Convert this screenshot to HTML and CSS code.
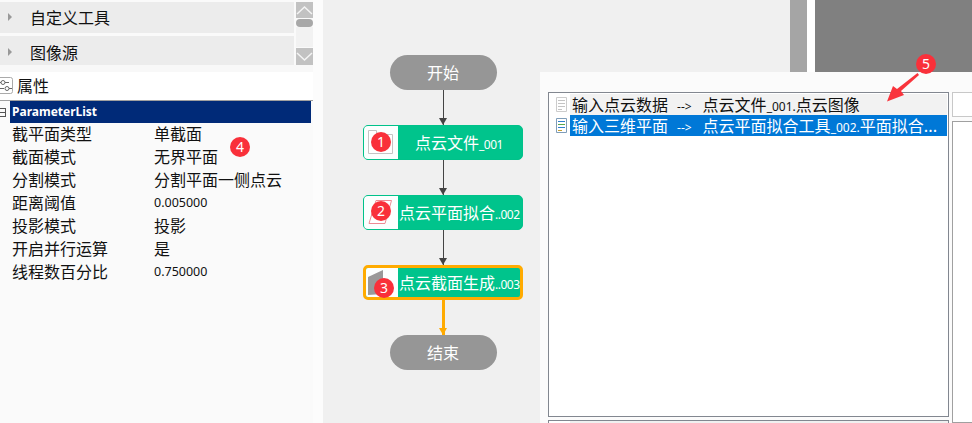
FILE: index.html
```html
<!DOCTYPE html>
<html>
<head lang="en">
    <meta charset="UTF-8">
    <title>流程编辑</title>
    <link rel="stylesheet" href="styles.css">
</head>
<body>
    <div id="page">
        <div id="side">
            <div id="tools">
                <div id="toolList">
                    <div class="tool"><i class="caret"></i>自定义工具</div>
                    <div class="tool"><i class="caret"></i>图像源</div>
                </div>
                <div id="scroll">
                    <span class="scrollBtn">
                        <svg width="17" height="16" viewBox="0 0 17 16"><path d="M1 12 L8.5 5 L16 12" fill="none" stroke="#f4f4f4" stroke-width="1.5"/></svg>
                    </span>
                    <span id="thumb"></span>
                    <span id="track"></span>
                    <span class="scrollBtn">
                        <svg width="17" height="17" viewBox="0 0 17 17"><path d="M1 5 L8.5 12 L16 5" fill="none" stroke="#f4f4f4" stroke-width="1.5"/></svg>
                    </span>
                </div>
            </div>
            <div id="propTitle">
                <svg width="14" height="19" viewBox="0 0 14 19"><path d="M-1 1.5 H10.5 Q12.5 1.5 12.5 3.5 V15.5 Q12.5 17.5 10.5 17.5 H-1" fill="none" stroke="#aaa"/><path d="M0 6.5 H9 M0 12.5 H4 M9 12.5 H12" stroke="#666" fill="none"/><circle cx="3" cy="6.5" r="2" fill="#fff" stroke="#666"/><circle cx="7" cy="12.5" r="2" fill="#fff" stroke="#666"/></svg>
                <span>属性</span>
            </div>
            <div id="propGroup">
                <span id="fold"></span>
                <div id="groupName">ParameterList</div>
            </div>
            <ul id="props">
                <li><span>截平面类型</span><span>单截面</span></li>
                <li><span>截面模式</span><span>无界平面</span></li>
                <li><span>分割模式</span><span>分割平面一侧点云</span></li>
                <li><span>距离阈值</span><span class="num">0.005000</span></li>
                <li><span>投影模式</span><span>投影</span></li>
                <li><span>开启并行运算</span><span>是</span></li>
                <li><span>线程数百分比</span><span class="num">0.750000</span></li>
            </ul>
        </div>
        <div id="strip"></div>
        <div id="canvas">
            <div id="flow">
                <div class="pill">开始</div>
                <div class="link"></div>
                <div class="node">
                    <div class="nodeIcon">
                        <svg width="34" height="33" viewBox="0 0 34 33"><path d="M4.5 4.5 H12.5 V8.5 H28.5 V27.5 H4.5 Z" fill="#fff" stroke="#c4c4c4"/></svg>
                    </div>
                    <div class="nodeName wide">点云文件<small>_001</small></div>
                </div>
                <div class="link"></div>
                <div class="node">
                    <div class="nodeIcon">
                        <svg width="34" height="33" viewBox="0 0 34 33"><path d="M12 4.5 H27.5 L21 27.5 H5 Z" fill="#fff" stroke="#ee8a94"/></svg>
                    </div>
                    <div class="nodeName">点云平面拟合<small>..002</small></div>
                </div>
                <div class="link"></div>
                <div class="node active">
                    <div class="nodeIcon">
                        <svg width="32" height="29" viewBox="0 0 32 29"><path d="M2 9 L17 2 V26 L2 27 Z" fill="#999"/></svg>
                    </div>
                    <div class="nodeName">点云截面生成<small>..003</small></div>
                </div>
                <div class="link active"></div>
                <div class="pill">结束</div>
            </div>
        </div>
    </div>

    <div id="winA"></div>
    <div id="winB"></div>

    <div id="dialog">
        <div id="dialogMain">
            <div id="inputList">
                <div class="input first">
                    <svg class="doc" width="13" height="15" viewBox="0 0 13 15"><path d="M1.5 .5 H11.5 V14.5 H1.5 Z" fill="#fff" stroke="#ccc"/><path d="M3 3.5 H10 M3 6.5 H10 M3 9.5 H10 M3 12.5 H7" stroke="#c4c4c4"/></svg>
                    <div class="inputText"><span class="cjk">输入点云数据</span><span class="to">--&gt;</span><span class="cjk">点云文件<small>_001.</small>点云图像</span></div>
                </div>
                <div class="input sel">
                    <svg class="doc" width="13" height="15" viewBox="0 0 13 15"><path d="M1.5 .5 H11.5 V14.5 H1.5 Z" fill="#fff" stroke="#7f9db9"/><path d="M3 3.5 H10" stroke="#2f7fd0"/><path d="M3 6.5 H10" stroke="#5aa84a"/><path d="M3 9.5 H10" stroke="#2f7fd0"/><path d="M3 12.5 H7" stroke="#c8a030"/></svg>
                    <div class="inputText"><span class="cjk">输入三维平面</span><span class="to">--&gt;</span><span class="cjk">点云平面拟合工具<small>_002.</small>平面拟合...</span></div>
                </div>
            </div>
            <div id="lowerList"><span></span></div>
        </div>
        <div id="dialogSide">
            <div id="sideBtn"></div>
            <div id="sideBox"></div>
        </div>
    </div>

    <span class="mark m1">1</span>
    <span class="mark m2">2</span>
    <span class="mark m3">3</span>
    <span class="mark m4">4</span>
    <span class="mark m5">5</span>
    <svg id="pointer" width="40" height="36" viewBox="0 0 40 36"><path d="M31.5 3 L33 5 L15 21 L18 25 L1 31.5 L7 16 L11 19 Z" fill="#f9343c"/></svg>
</body>
</html>
```

FILE: styles.css
```css
*{
    margin: 0;
    padding: 0;
    box-sizing: border-box;
}
ul{
    list-style: none;
}
html,body{
    height: 100%;
    overflow: hidden;
}
body{
    font-family: "Noto Sans CJK SC", "Liberation Sans", sans-serif;
    font-size: 16px;
    color: #111;
    background: #f0f0f0;
}
small{
    font-family: "Noto Sans", "Liberation Sans", sans-serif;
    font-size: 12px;
}
#page{
    display: flex;
    height: 423px;
}

/* 左侧 */
#side{
    width: 313px;
    background: #fafafa;
    flex: none;
}
#strip{
    width: 10px;
    background: #fcfcfc;
    flex: none;
}
#tools{
    display: flex;
    height: 65px;
    padding-top: 2px;
    background: #fafafa;
}
#toolList{
    width: 294px;
    margin-right: 2px;
    display: flex;
    flex-direction: column;
    gap: 3px;
}
.tool{
    height: 31px;
    display: flex;
    align-items: center;
    background: #ececec;
    line-height: 20px;
    padding: 0 0 2px 8px;
}
.tool + .tool{
    height: 29px;
    padding: 3px 0 0 8px;
}
.caret{
    width: 0;
    height: 0;
    border-left: 4px solid #999;
    border-top: 4px solid transparent;
    border-bottom: 4px solid transparent;
    margin-right: 18px;
}
#scroll{
    width: 17px;
    display: flex;
    flex-direction: column;
}
.scrollBtn{
    background: #c2c2c2;
    display: block;
    line-height: 0;
}
#thumb{
    height: 8px;
    margin-top: 1px;
    background: #a8a8a8;
    border-radius: 4px;
}
#track{
    flex: 1;
    background: #f2f2f2;
    margin-bottom: 1px;
}
#propTitle{
    height: 36px;
    padding-top: 5px;
    background: linear-gradient(#f8f8f8 7px, #fff 7px);
    border-bottom: 1px solid #a0a0a0;
    display: flex;
    align-items: center;
    gap: 3px;
}
#propGroup{
    display: flex;
    height: 22px;
    align-items: center;
}
#fold{
    width: 6px;
    height: 9px;
    border: 1px solid #555;
    border-left: 0;
    background: linear-gradient(#555,#555) center/100% 1px no-repeat;
    margin-right: 4px;
}
#groupName{
    flex: 1;
    height: 22px;
    margin-right: 2px;
    background: #002a78;
    color: #fff;
    font-family: "Noto Sans", "Liberation Sans", sans-serif;
    font-size: 12px;
    font-weight: 700;
    line-height: 22px;
    padding-left: 2px;
}
#props li{
    display: flex;
    height: 23px;
    line-height: 21px;
    padding-left: 12px;
}
#props li span:first-child{
    width: 142px;
}
#props .num{
    font-family: "Noto Sans", "Liberation Sans", sans-serif;
    font-size: 12.5px;
}

/* 流程 */
#canvas{
    flex: 1;
    padding: 55px 0 0 40px;
}
#flow{
    width: 160px;
    display: flex;
    flex-direction: column;
    align-items: center;
}
.pill{
    width: 107px;
    height: 35px;
    border-radius: 18px;
    background: #969696;
    color: #fff;
    text-align: center;
    line-height: 35px;
}
.link{
    width: 1px;
    height: 35px;
    background: #444;
    position: relative;
}
.link:after{
    content: "";
    position: absolute;
    left: -4px;
    bottom: 0;
    border-top: 7px solid #444;
    border-left: 4.5px solid transparent;
    border-right: 4.5px solid transparent;
}
.link.active{
    width: 3px;
    background: #ffab00;
}
.link.active:after{
    left: -3px;
    border-top-color: #ffab00;
}
.node{
    width: 160px;
    height: 35px;
    display: flex;
    border: 1px solid #00c28a;
    border-radius: 5px;
    overflow: hidden;
    background: #00c48c;
    color: #fff;
}
.node.active{
    border: 3px solid #ffab00;
}
.nodeIcon{
    width: 34px;
    flex: none;
    background: #fbfffe;
    line-height: 0;
}
.node.active .nodeIcon{
    width: 32px;
}
.nodeName{
    flex: 1;
    line-height: 33px;
    white-space: nowrap;
    padding-left: 1px;
}
.nodeName small{
    letter-spacing: -.5px;
}
.nodeName.wide{
    padding-left: 17px;
}
.node.active .nodeName{
    line-height: 29px;
}

/* 右上窗口 */
#winA{
    position: absolute;
    left: 790px;
    top: 0;
    width: 17px;
    height: 72px;
    background: #a5a5a5;
}
#winB{
    position: absolute;
    left: 807px;
    top: 0;
    width: 165px;
    height: 72px;
    border-left: 8px solid #fff;
    background: #808080;
}

/* 对话框 */
#dialog{
    position: absolute;
    left: 540px;
    top: 72px;
    width: 432px;
    height: 351px;
    background: #fbfbfb;
    padding: 20px 0 0 8px;
    display: flex;
    gap: 3px;
}
#dialogMain{
    width: 401px;
    flex: none;
}
#inputList{
    height: 325px;
    border: 1px solid #828790;
    background: #fff;
    padding: 1px;
}
.input{
    display: flex;
    height: 21px;
    align-items: center;
}
.doc{
    flex: none;
    margin: 0 2px 0 5px;
}
.inputText{
    flex: 1;
    height: 21px;
    line-height: 21px;
    white-space: nowrap;
    padding-left: 2px;
}
.input.first .inputText{
    background: #f2f2f2;
}
.input.sel .inputText{
    background: #0078d7;
    color: #fff;
}
.to{
    font-family: "Noto Sans", "Liberation Sans", sans-serif;
    font-size: 12px;
    margin: 0 11px 0 9px;
}
#lowerList{
    height: 3px;
    margin-top: 3px;
    border: 1px solid #828790;
    border-bottom: 0;
    padding-left: 21px;
    background: #fff;
}
#lowerList span{
    display: block;
    height: 2px;
    background: #f0f0f0;
}
#dialogSide{
    flex: 1;
    display: flex;
    flex-direction: column;
    gap: 4px;
}
#sideBtn{
    height: 25px;
    border: 1px solid #c8c8c8;
    border-right: 0;
    background: #fff;
}
#sideBox{
    flex: 1;
    border: 1px solid #a0a0a0;
    border-right: 0;
    background: #fff;
}

/* 标注 */
.mark{
    position: absolute;
    width: 20px;
    height: 20px;
    border-radius: 50%;
    background: #f9303a;
    color: #fff;
    font-family: "Noto Sans", "Liberation Sans", sans-serif;
    font-size: 14px;
    line-height: 20px;
    text-align: center;
}
.m1{ left: 371px; top: 132px; }
.m2{ left: 371px; top: 201px; }
.m3{ left: 374px; top: 278px; }
.m4{ left: 230px; top: 137px; }
.m5{ left: 916px; top: 54px; }
#pointer{
    position: absolute;
    left: 886px;
    top: 70px;
}
```
